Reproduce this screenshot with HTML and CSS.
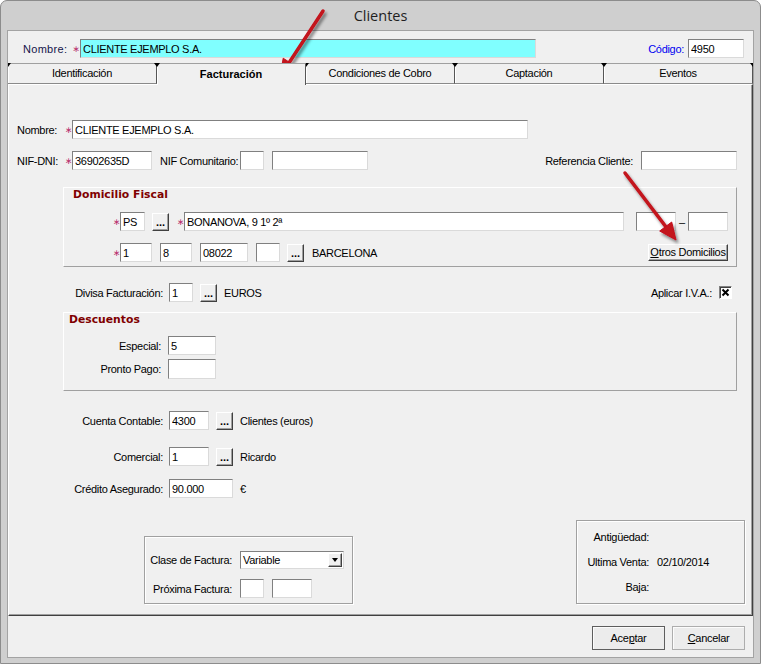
FILE: index.html
```html
<!DOCTYPE html>
<html lang="es">
  <head>
    <meta charset="UTF-8" />
    <title>Clientes</title>
    <link rel="stylesheet" href="styles.css">
  </head>
  <body>
    <div class="window">
      <div class="titlebar">Clientes</div>

      <div class="client">
        <!-- Cabecera: nombre y código -->
        <div class="head-row">
          <span class="head-label">Nombre:</span><span class="req">∗</span>
          <input class="edit edit-cyan w456" value="CLIENTE EJEMPLO S.A." readonly>
          <span class="code-label">Código:</span>
          <input class="edit w56" value="4950" readonly>
        </div>

        <div class="tabs">
          <div class="tab">Identificación</div>
          <div class="tab active">Facturación</div>
          <div class="tab">Condiciones de Cobro</div>
          <div class="tab">Captación</div>
          <div class="tab">Eventos</div>
        </div>

        <div class="panel">
          <div class="row r-nombre">
            <span class="lbl-l">Nombre:</span><span class="req">∗</span>
            <input class="edit w456" value="CLIENTE EJEMPLO S.A." readonly>
          </div>

          <div class="row r-nif">
            <span class="lbl-l">NIF-DNI:</span><span class="req">∗</span>
            <input class="edit w80" value="36902635D" readonly>
            <span class="lbl-nifc">NIF Comunitario:</span>
            <input class="edit w24" readonly>
            <input class="edit w96 ml8" readonly>
            <span class="lbl-ref">Referencia Cliente:</span>
            <input class="edit w96" readonly>
          </div>

          <!-- Domicilio Fiscal -->
          <div class="group raised g-dom">
            <div class="g-title">Domicilio Fiscal</div>
            <div class="row row1">
              <span class="req">∗</span><input class="edit w25" value="PS" readonly>
              <span class="dots ml7">...</span>
              <span class="req ml8">∗</span><input class="edit w440" value="BONANOVA, 9 1º 2ª" readonly>
              <input class="edit w40 ml12" readonly>
              <span class="dash">–</span>
              <input class="edit w40" readonly>
            </div>
            <div class="row row2">
              <span class="req">∗</span><input class="edit w32" value="1" readonly>
              <input class="edit w32 ml8" value="8" readonly>
              <input class="edit w48 ml8" value="08022" readonly>
              <input class="edit w24 ml8" readonly>
              <span class="dots ml7">...</span>
              <span class="ml8">BARCELONA</span>
              <span class="btn-small"><u>O</u>tros Domicilios</span>
            </div>
          </div>

          <div class="row r-divisa">
            <span class="lbl-r">Divisa Facturación:</span>
            <input class="edit w24" value="1" readonly>
            <span class="dots ml7">...</span>
            <span class="ml7">EUROS</span>
            <span class="lbl-iva">Aplicar I.V.A.:</span>
            <span class="check">
              <svg width="9" height="9" viewBox="0 0 9 9"><path d="M1.5 1.5 L7.5 7.5 M7.5 1.5 L1.5 7.5" stroke="#000" stroke-width="2"/></svg>
            </span>
          </div>

          <!-- Descuentos -->
          <div class="group raised g-desc">
            <div class="g-title">Descuentos</div>
            <div class="row row1">
              <span class="lbl-d">Especial:</span>
              <input class="edit w48" value="5" readonly>
            </div>
            <div class="row row2">
              <span class="lbl-d">Pronto Pago:</span>
              <input class="edit w48 h20" readonly>
            </div>
          </div>

          <div class="row r-cuenta">
            <span class="lbl-r">Cuenta Contable:</span>
            <input class="edit w40" value="4300" readonly>
            <span class="dots ml7">...</span>
            <span class="ml7">Clientes (euros)</span>
          </div>

          <div class="row r-comercial">
            <span class="lbl-r">Comercial:</span>
            <input class="edit w40" value="1" readonly>
            <span class="dots ml7">...</span>
            <span class="ml7">Ricardo</span>
          </div>

          <div class="row r-credito">
            <span class="lbl-r">Crédito Asegurado:</span>
            <input class="edit w64" value="90.000" readonly>
            <span class="ml7">€</span>
          </div>

          <div class="bottom-row">
            <div class="group etched g-clase">
              <div class="row">
                <span class="lbl-c">Clase de Factura:</span>
                <div class="select">
                  <span>Variable</span>
                  <span class="select-btn"></span>
                </div>
              </div>
              <div class="row row2">
                <span class="lbl-c">Próxima Factura:</span>
                <input class="edit w24" readonly>
                <input class="edit w40 ml8" readonly>
              </div>
            </div>

            <div class="group etched g-info">
              <div class="info-row"><span class="lbl-i">Antigüedad:</span></div>
              <div class="info-row"><span class="lbl-i">Ultima Venta:</span><span class="ml8">02/10/2014</span></div>
              <div class="info-row"><span class="lbl-i">Baja:</span></div>
            </div>
          </div>
        </div>

        <div class="footer">
          <span class="btn btn-default">Ace<u>p</u>tar</span>
          <span class="btn"><u>C</u>ancelar</span>
        </div>
      </div>

      <!-- flechas rojas de la captura -->
      <svg class="arrows" width="761" height="664" viewBox="0 0 761 664">
        <defs>
          <filter id="shadow" x="-30%" y="-30%" width="160%" height="160%">
            <feDropShadow dx="2" dy="3" stdDeviation="1.6" flood-color="#000" flood-opacity="0.45"/>
          </filter>
        </defs>
        <g fill="#c3121b" stroke="#c3121b" stroke-linejoin="round" filter="url(#shadow)">
          <line x1="323" y1="11" x2="289.4" y2="62.3" stroke-width="3.5" stroke-linecap="round"/>
          <polygon points="280,76.5 295.6,66.4 283.2,58.2" stroke-width="1"/>
        </g>
        <g fill="#c3121b" stroke="#c3121b" stroke-linejoin="round" filter="url(#shadow)">
          <line x1="625" y1="173" x2="665.7" y2="226.5" stroke-width="3.5" stroke-linecap="round"/>
          <polygon points="676,240 671.7,222 659.7,231" stroke-width="1"/>
        </g>
      </svg>
    </div>
  </body>
</html>
```

FILE: styles.css
```css
* {
  box-sizing: border-box;
}
body {
  margin: 0;
  background: #fff;
  font-family: "Liberation Sans", Arial, sans-serif;
  font-size: 11px;
  letter-spacing: -0.3px;
  color: #000;
}
u {
  text-decoration: underline;
}

/* Marco de la ventana */
.window {
  position: relative;
  width: 761px;
  height: 664px;
  border: 1px solid #8c8c8c;
  border-radius: 7px 7px 0 0;
  background: #cfcfcf;
  padding: 0 7px 6px;
  display: flex;
  flex-direction: column;
}
.titlebar {
  height: 30px;
  line-height: 30px;
  text-align: center;
  font-family: "Open Sans", sans-serif;
  font-size: 14.5px;
  letter-spacing: 0;
  color: #1f1f1f;
}
.client {
  flex: 1;
  display: flex;
  flex-direction: column;
  background: #f0f0f0;
  box-shadow: 0 0 0 1px #a3a3a3;
  overflow: hidden;
}

/* Controles */
.edit {
  flex-shrink: 0;
  height: 19px;
  padding: 0 2px;
  border: 1px solid;
  border-color: #808080 #dadada #dadada #808080;
  background: #fff;
  font: inherit;
  letter-spacing: -0.3px;
  color: #000;
  outline: none;
}
.edit-cyan {
  background: #80ffff;
}
.h20 {
  height: 20px;
}
.req {
  flex-shrink: 0;
  width: 7px;
  text-align: center;
  font-family: "DejaVu Sans", sans-serif;
  font-size: 9px;
  color: #b8306e;
}
.dots {
  flex-shrink: 0;
  width: 17px;
  height: 18px;
  border: 1px solid;
  border-color: #fff #404040 #404040 #fff;
  box-shadow: inset -1px -1px 0 #a0a0a0;
  text-align: center;
  line-height: 16px;
  font-weight: bold;
  letter-spacing: 0;
}
.btn-small {
  flex-shrink: 0;
  margin-left: auto;
  width: 80px;
  height: 17px;
  border: 1px solid;
  border-color: #fff #404040 #404040 #fff;
  box-shadow: inset -1px -1px 0 #a0a0a0;
  text-align: center;
  line-height: 15px;
}
.check {
  flex-shrink: 0;
  display: flex;
  align-items: center;
  justify-content: center;
  width: 13px;
  height: 13px;
  margin-left: 7px;
  border: 1px solid;
  border-color: #808080 #fff #fff #808080;
  box-shadow: inset 1px 1px 0 #404040;
  background: #fff;
}
.select {
  flex-shrink: 0;
  display: flex;
  align-items: center;
  width: 104px;
  height: 18px;
  padding-left: 2px;
  border: 1px solid;
  border-color: #808080 #dadada #dadada #808080;
  background: #fff;
}
.select-btn {
  display: flex;
  align-items: center;
  justify-content: center;
  margin-left: auto;
  margin-right: 1px;
  width: 14px;
  height: 14px;
  border: 1px solid;
  border-color: #fff #404040 #404040 #fff;
  box-shadow: inset -1px -1px 0 #a0a0a0;
  background: #f0f0f0;
}
.select-btn::after {
  content: "";
  border-left: 3.5px solid transparent;
  border-right: 3.5px solid transparent;
  border-top: 4px solid #000;
}
.dash {
  flex-shrink: 0;
  width: 12px;
  text-align: center;
}

.w24 { width: 24px; }
.w25 { width: 25px; }
.w32 { width: 32px; }
.w40 { width: 40px; }
.w48 { width: 48px; }
.w56 { width: 56px; }
.w64 { width: 64px; }
.w80 { width: 80px; }
.w96 { width: 96px; }
.w440 { width: 440px; }
.w456 { width: 456px; }
.ml7 { margin-left: 7px; }
.ml8 { margin-left: 8px; }
.ml12 { margin-left: 12px; }

/* Cabecera */
.head-row {
  display: flex;
  align-items: center;
  height: 27px;
  padding: 8px 9px 0 15px;
}
.head-label {
  width: 49px;
  letter-spacing: 0.3px;
  color: #14144a;
}
.head-row .req {
  width: 8px;
}
.code-label {
  margin-left: auto;
  margin-right: 4px;
  color: #0000f0;
}

/* Pestañas */
.tabs {
  display: flex;
  height: 21px;
  margin-top: 5px;
  flex-shrink: 0;
}
.tab {
  position: relative;
  flex: 1;
  height: 21px;
  border-top: 1px solid #a0a0a0;
  border-right: 1px solid #555;
  border-bottom: 1px solid #8a8a8a;
  box-shadow: inset 1px 0 0 #fff;
  background: #f0f0f0;
  text-align: center;
  line-height: 19px;
}
.tab.active {
  height: 22px;
  border-bottom: 0;
  line-height: 21px;
  font-weight: bold;
  letter-spacing: 0;
  z-index: 1;
}
.tab::before,
.tab:last-child::after {
  content: "";
  position: absolute;
  top: -1px;
  border-left: 3px solid transparent;
  border-right: 3px solid transparent;
  border-top: 4px solid #000;
}
.tab::before {
  left: -3px;
}
.tab:last-child::after {
  right: -4px;
}

/* Panel de la pestaña */
.panel {
  flex-shrink: 0;
  height: 532px;
  border: 1px solid;
  border-color: #fff #404040 #404040 #fff;
  box-shadow: inset -1px -1px 0 #a0a0a0;
  display: flex;
  flex-direction: column;
}
.row {
  display: flex;
  align-items: center;
  height: 19px;
  flex-shrink: 0;
  white-space: nowrap;
}
.lbl-l {
  width: 48px;
}
.lbl-r {
  width: 99px;
  margin: 0 6px 0 55px;
  text-align: right;
}
.lbl-nifc {
  width: 80px;
  margin-left: 8px;
}
.lbl-ref {
  margin: 0 8px 0 auto;
}
.lbl-iva {
  margin-left: auto;
}
.r-nombre {
  margin-top: 35px;
  padding-left: 8px;
}
.r-nif {
  margin-top: 12px;
  padding: 0 15px 0 8px;
}
.r-divisa {
  margin-top: 16px;
  padding-right: 20px;
}
.r-cuenta {
  margin-top: 20px;
}
.r-comercial {
  margin-top: 17px;
}
.r-credito {
  margin-top: 13px;
}

/* Grupos */
.group {
  flex-shrink: 0;
  border: 1px solid;
}
.raised {
  border-color: #fff #a0a0a0 #a0a0a0 #fff;
}
.etched {
  border-color: #a0a0a0;
  box-shadow: inset 1px 1px 0 #fff, 1px 1px 0 #fff;
}
.g-title {
  font-family: "DejaVu Sans", sans-serif;
  font-weight: bold;
  font-size: 10.8px;
  line-height: 14px;
  letter-spacing: 0;
  color: #800000;
}
.g-dom {
  width: 674px;
  height: 80px;
  margin: 17px 0 0 54px;
}
.g-dom .g-title {
  padding-left: 9px;
}
.g-dom .row {
  padding: 0 8px 0 49px;
}
.g-dom .row1 {
  margin-top: 10px;
}
.g-dom .row2 {
  margin-top: 12px;
}
.g-desc {
  width: 674px;
  height: 79px;
  margin: 10px 0 0 54px;
}
.g-desc .g-title {
  padding-left: 5px;
}
.g-desc .row1 {
  margin-top: 9px;
}
.g-desc .row2 {
  margin-top: 4px;
}
.lbl-d {
  width: 97px;
  margin-right: 7px;
  text-align: right;
}

.bottom-row {
  display: flex;
  align-items: flex-end;
  margin-top: 22px;
  padding: 0 7px 0 135px;
}
.g-clase {
  width: 209px;
  height: 68px;
  padding-top: 13px;
}
.g-clase .row2 {
  margin-top: 10px;
}
.lbl-c {
  width: 87px;
  margin-right: 8px;
  text-align: right;
}
.g-info {
  margin-left: auto;
  width: 169px;
  height: 84px;
  padding-top: 4px;
}
.info-row {
  display: flex;
  height: 25px;
  line-height: 25px;
}
.lbl-i {
  width: 72px;
  text-align: right;
}

/* Botones inferiores */
.footer {
  flex: 1;
  display: flex;
  justify-content: flex-end;
  gap: 7px;
  padding: 10px 8px 0 0;
}
.btn {
  width: 73px;
  height: 24px;
  border: 1px solid #adadad;
  background: #ececec;
  box-shadow: inset 1px 1px 0 #fcfcfc;
  text-align: center;
  line-height: 22px;
}
.btn-default {
  border-color: #5e5e5e;
}

.arrows {
  position: absolute;
  left: -1px;
  top: -1px;
  pointer-events: none;
}
```
